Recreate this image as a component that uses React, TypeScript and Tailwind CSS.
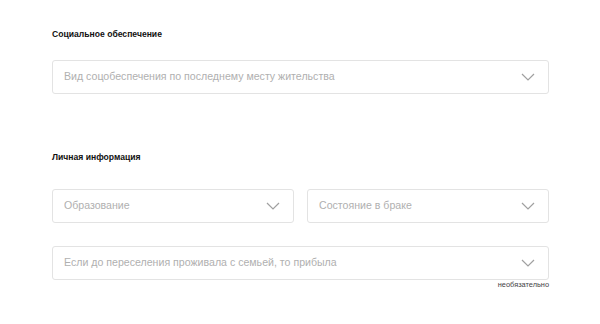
const Chevron = () => (
  <svg width="14" height="8" viewBox="0 0 14 8" fill="none" className="shrink-0">
    <path d="M1 1l6 6 6-6" stroke="#a0a0a0" strokeWidth="1.2" />
  </svg>
)

type SelectProps = {
  placeholder: string
  className?: string
}

const FakeSelect = ({ placeholder, className = '' }: SelectProps) => (
  <div
    className={`flex h-[34px] items-center justify-between rounded-[3px] border border-[#e3e3e3] bg-white pl-[11px] pr-[13px] ${className}`}
  >
    <span className="truncate text-[10.6px] text-[#b0b0b0]">{placeholder}</span>
    <Chevron />
  </div>
)

export default function App() {
  return (
    <div
      className="h-[324px] w-[600px] bg-white pl-[52px] pr-[51px] pt-[29px]"
      style={{ fontFamily: '"Liberation Sans", Arial, sans-serif' }}
    >
      <h2 className="text-[8.6px] font-bold leading-[10px] text-[#111]">Социальное обеспечение</h2>
      <FakeSelect className="mt-[21px]" placeholder="Вид соцобеспечения по последнему месту жительства" />

      <h2 className="mt-[58px] text-[8.6px] font-bold leading-[10px] text-[#111]">Личная информация</h2>
      <div className="mt-[27px] grid grid-cols-2 gap-[13px]">
        <FakeSelect placeholder="Образование" />
        <FakeSelect placeholder="Состояние в браке" />
      </div>

      <FakeSelect className="mt-[23px]" placeholder="Если до переселения проживала с семьей, то прибыла" />
      <p className="mt-[1px] text-right text-[7.4px] leading-[8px] text-[#444]">необязательно</p>
    </div>
  )
}
